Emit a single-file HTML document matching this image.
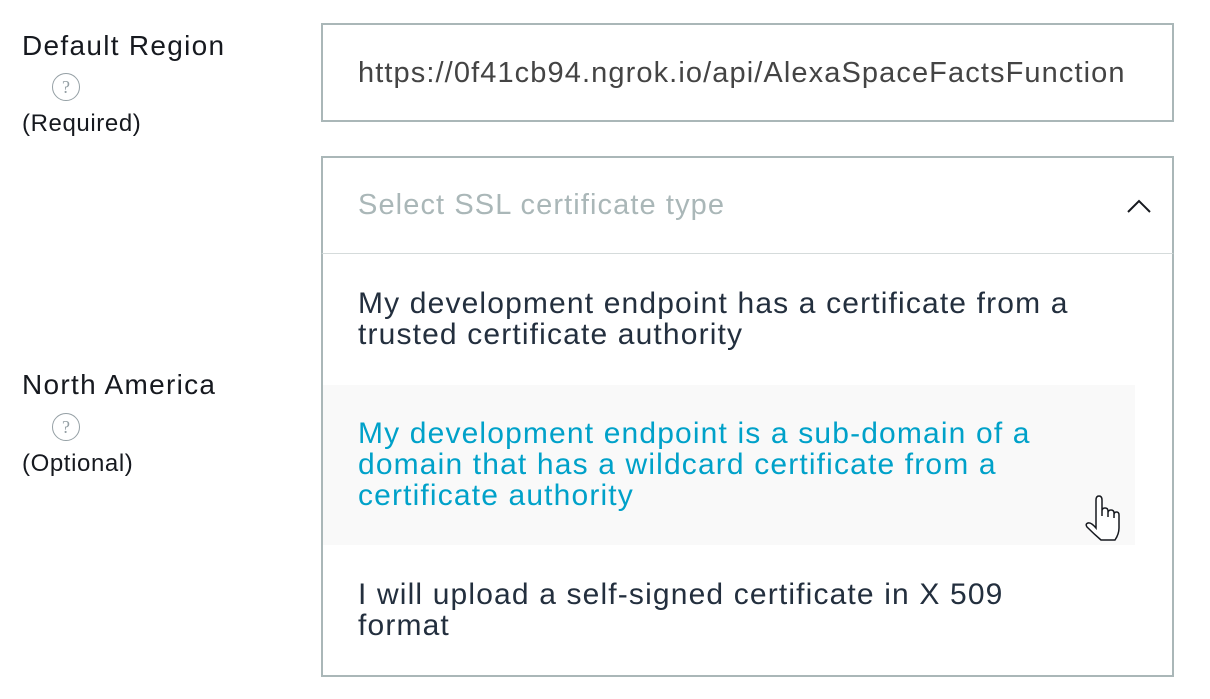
<!DOCTYPE html>
<html><head><meta charset="utf-8"><style>
body{margin:0;width:1210px;height:699px;background:#fff;font-family:"Liberation Sans",sans-serif;position:relative;overflow:hidden;color:#232f3e}
.a{position:absolute}
.lbl{font-size:28px;color:#16191f;white-space:nowrap;letter-spacing:1.3px}
.sm{font-size:24px;color:#16191f;letter-spacing:0.6px}
.q{width:28px;height:28px;border:1.5px solid #95a0a5;border-radius:50%;box-sizing:border-box;font-size:18px;color:#95a0a5;text-align:center;line-height:26px;font-family:"Liberation Serif",serif}
.box{border:2px solid #aab7b8;box-sizing:border-box}
.opt{font-size:30px;line-height:31px;color:#232f3e;white-space:nowrap;letter-spacing:1.15px}
</style></head><body>
<div class="a lbl" style="left:22px;top:30px">Default Region</div>
<div class="a q" style="left:52px;top:73px">?</div>
<div class="a sm" style="left:22px;top:110px">(Required)</div>
<div class="a lbl" style="left:22px;top:369px">North America</div>
<div class="a q" style="left:52px;top:413px">?</div>
<div class="a sm" style="left:22px;top:450px">(Optional)</div>

<div class="a box" style="left:321px;top:23px;width:853px;height:99px"></div>
<div class="a" style="left:358px;top:57px;font-size:29px;letter-spacing:1.1px;color:#444;white-space:nowrap">https://0f41cb94.ngrok.io/api/AlexaSpaceFactsFunction</div>

<div class="a box" style="left:321px;top:156px;width:853px;height:99px;border-bottom:none"></div>
<div class="a" style="left:358px;top:189px;font-size:29px;letter-spacing:1.1px;color:#aab7b8;white-space:nowrap">Select SSL certificate type</div>
<svg class="a" style="left:1126px;top:198px" width="26" height="16"><path d="M2 14 L13 3 L24 14" fill="none" stroke="#16191f" stroke-width="2"/></svg>

<div class="a box" style="left:321px;top:253px;width:853px;height:424px;border-top:1.5px solid #d5dbdb"></div>
<div class="a" style="left:323px;top:385px;width:812px;height:160px;background:#f9f9f9"></div>
<div class="a opt" style="left:358px;top:288px">My development endpoint has a certificate from a<br>trusted certificate authority</div>
<div class="a opt" style="left:358px;top:418px;color:#00a1c9">My development endpoint is a sub-domain of a<br>domain that has a wildcard certificate from a<br>certificate authority</div>
<div class="a opt" style="left:358px;top:579px">I will upload a self-signed certificate in X 509<br>format</div>

<svg class="a" style="left:1082px;top:494px" width="40" height="50" viewBox="0 0 40 50"><path d="M14 34 L14 6 Q14 2 17 2 Q20 2 20 6 L20 22 L20 17 Q20 14 23 14 Q26 14 26 17 L26 23 L26 19 Q26 16 29 16 Q32 16 32 19 L32 24 L32 21 Q32 18 34.5 18 Q37 18 37 21 L37 34 Q37 40 33 46 L19 46 Q12 40 5 33 Q3 30 6 29 Q9 28 14 34 Z" fill="#fff" stroke="#16191f" stroke-width="1.5"/></svg>
</body></html>
